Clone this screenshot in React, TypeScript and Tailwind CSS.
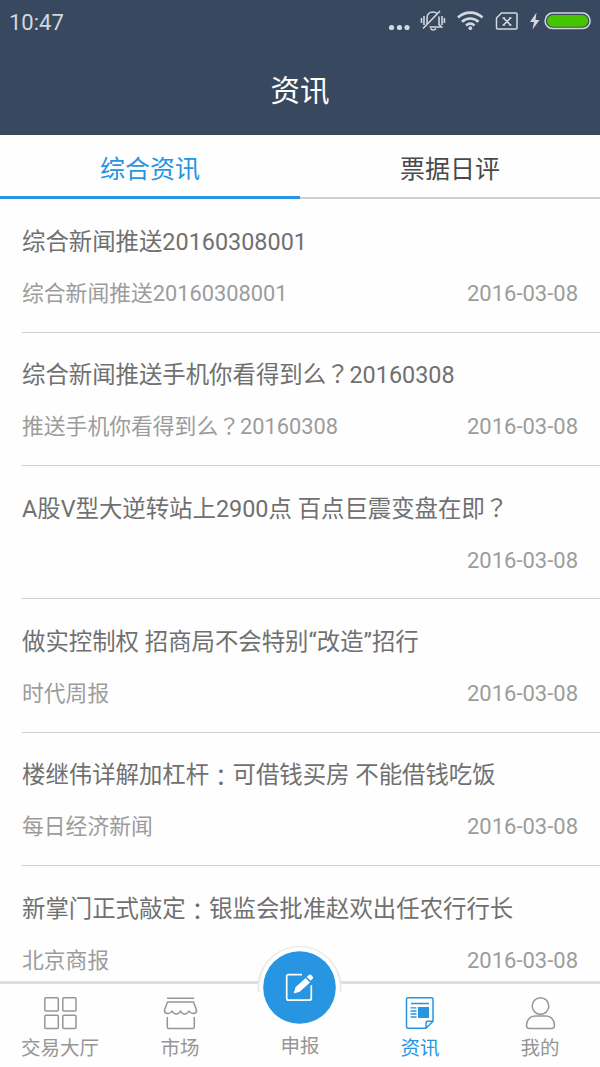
import React from 'react';

interface NewsItem {
  title: string;
  source: string;
  date: string;
}

const news: NewsItem[] = [
  { title: '综合新闻推送20160308001', source: '综合新闻推送20160308001', date: '2016-03-08' },
  { title: '综合新闻推送手机你看得到么？20160308', source: '推送手机你看得到么？20160308', date: '2016-03-08' },
  { title: 'A股V型大逆转站上2900点 百点巨震变盘在即？', source: '', date: '2016-03-08' },
  { title: '做实控制权 招商局不会特别“改造”招行', source: '时代周报', date: '2016-03-08' },
  { title: '楼继伟详解加杠杆：可借钱买房 不能借钱吃饭', source: '每日经济新闻', date: '2016-03-08' },
  { title: '新掌门正式敲定：银监会批准赵欢出任农行行长', source: '北京商报', date: '2016-03-08' },
];

// Full-width punctuation sits in the middle of its box in the TC face
const Mixed: React.FC<{ text: string }> = ({ text }) => (
  <>
    {text.split(/([？：])/).map((part, i) =>
      part === '？' || part === '：' ? (
        <span
          key={i}
          className={`relative leading-none font-['Noto_Sans_CJK_TC',sans-serif] ${part === '：' ? 'top-[3px]' : 'top-0'}`}
        >
          {part}
        </span>
      ) : (
        part
      )
    )}
  </>
);

const StatusBar: React.FC = () => (
  <div className="h-[45px] flex items-center justify-between pl-[9px] pr-[9px] text-[#d3d8de]">
    <span className="text-[22px] leading-none">10:47</span>
    <svg className="w-[204px] h-[45px]" viewBox="387 0 204 45" fill="none" stroke="currentColor">
      <g fill="currentColor" stroke="none">
        <circle cx="391.5" cy="27.5" r="2.6" />
        <circle cx="399.5" cy="27.5" r="2.6" />
        <circle cx="407" cy="27.5" r="2.6" />
      </g>
      {/* muted bell */}
      <g strokeWidth="1.6">
        <path d="M427 24v-6c0-3.500 2.500-6 6-6 1.700 0 3 .6 4 1.500M439 16.500v8l2.500 2.500H429.500M430.500 28.500c1.500 2 4 2 5.500 0" />
        <path d="M440 11L423 28.500" />
        <path d="M424 16v9M421.500 18v5M442 16v9M444.400 18v5" />
      </g>
      {/* wifi */}
      <g strokeWidth="2.6">
        <path d="M458 17.500c7-6.500 17.500-6.500 24.500 0" />
        <path d="M462 21.800c4.800-4.400 11.700-4.400 16.500 0" />
        <path d="M466 25.500c2.600-2.200 5.900-2.200 8.500 0" />
      </g>
      <circle cx="470.300" cy="28.200" r="1.900" fill="currentColor" stroke="none" />
      {/* no sim */}
      <path d="M501.500 13h14.500q1 0 1 1v14q0 1-1 1h-18.500q-1 0-1-1V18z" strokeWidth="1.500" />
      <path d="M503.500 18l7 7M510.500 18l-7 7M502.500 18h2.500M509 18h2.500M502.500 25h2.500M509 25h2.500" strokeWidth="1.600" />
      {/* charging battery */}
      <path d="M536.500 12.500l-6.500 9.500h4l-1.500 7.500 7-9.500h-4z" fill="currentColor" stroke="none" />
      <rect x="545.100" y="13.100" width="45" height="15.500" rx="7.700" strokeWidth="1.500" />
      <rect x="547" y="15" width="41.200" height="11.700" rx="5.800" fill="#47c400" stroke="none" />
    </svg>
  </div>
);

const NewsRow: React.FC<{ item: NewsItem }> = ({ item }) => (
  <li className="h-[133.330px] ml-[22px] pr-[22px] pt-[26.500px] border-b border-[#cfcfcf] whitespace-nowrap">
    <h2 className="h-8 text-[23.400px] leading-8 text-[#707070]">
      <Mixed text={item.title} />
    </h2>
    <div className="mt-5 h-8 flex justify-between text-[21.800px] leading-8 text-[#9c9c9c]">
      <span><Mixed text={item.source} /></span>
      <span className="text-[22px]">{item.date}</span>
    </div>
  </li>
);

const GridIcon = () => (
  <svg className="w-9 h-9" viewBox="42 995 36 36" fill="none" stroke="currentColor" strokeWidth="1.500">
    <rect x="44.800" y="997.800" width="13.500" height="13.200" rx="1" />
    <rect x="62.800" y="997.800" width="13.200" height="13.200" rx="1" />
    <rect x="44.800" y="1015.300" width="13.500" height="13.200" rx="1" />
    <rect x="62.800" y="1015.300" width="13.200" height="13.200" rx="1" />
  </svg>
);

const ShopIcon = () => (
  <svg className="w-9 h-9" viewBox="162 995 36 36" fill="none" stroke="currentColor" strokeWidth="1.500">
    <path d="M167 998.300h27M167.500 1002h26l3 8c.5 4-5.500 5-7.500 1-2 4-6.500 4-8.500 0-2 4-6.500 4-8.500 0-2 4-8 3-7.500-1z" strokeLinejoin="round" />
    <path d="M167.300 1017v10q0 1.500 1.500 1.500h24q1.500 0 1.500-1.500v-10" />
  </svg>
);

const PaperIcon = () => (
  <svg className="w-9 h-9" viewBox="402 995 36 36" fill="none" stroke="currentColor" strokeWidth="1.500">
    <path d="M408 997.800h23.500q1.500 0 1.500 1.500v22l-7 7h-18q-1.500 0-1.500-1.500v-27.500q0-1.500 1.500-1.500z" />
    <path d="M426 1028v-5q0-1.700 1.700-1.700h5.300" />
    <path d="M411 1003.500h18M410.500 1007.800h6M410.500 1011h6M410.500 1014h6M410.500 1017h6" strokeWidth="1.300" />
    <rect x="418" y="1007" width="11" height="11" fill="currentColor" stroke="none" />
  </svg>
);

const UserIcon = () => (
  <svg className="w-9 h-9" viewBox="522 995 36 36" fill="none" stroke="currentColor" strokeWidth="1.500">
    <circle cx="540.500" cy="1006" r="8.300" />
    <path d="M535 1016h11c5 0 8.500 4 8.500 9.500q0 3-3 3h-22q-3 0-3-3c0-5.500 3.500-9.500 8.500-9.500z" />
  </svg>
);

interface NavTabProps {
  label: string;
  active?: boolean;
  children: React.ReactNode;
}

const NavTab: React.FC<NavTabProps> = ({ label, active, children }) => (
  <button className={`flex-1 flex flex-col items-center pt-[11px] ${active ? 'text-[#2795e1]' : 'text-[#969696]'}`}>
    {children}
    <span className="mt-0.5 text-[19.500px] leading-8">{label}</span>
  </button>
);

const App: React.FC = () => {
  return (
    <div className="w-[600px] h-[1067px] flex flex-col overflow-hidden bg-[#fefefe] font-[Roboto,'Noto_Sans_CJK_SC',sans-serif]">
      <header className="h-[135px] shrink-0 bg-[#38495f]">
        <StatusBar />
        <h1 className="h-[90px] text-center text-[29.500px] leading-[92px] text-white">资讯</h1>
      </header>

      <nav className="h-16 shrink-0 flex text-[25px] leading-[70px]">
        <button className="flex-1 h-16 border-b-3 border-[#2795e1] text-[#2795e1]">综合资讯</button>
        <button className="flex-1 h-16 border-b-2 border-[#cfcfcf] text-[#4a4a4a]">票据日评</button>
      </nav>

      <ul className="flex-1 min-h-0 overflow-hidden pt-[0.500px]">
        {news.map((item) => (
          <NewsRow key={item.title} item={item} />
        ))}
      </ul>

      <footer className="relative h-[86px] shrink-0 flex border-t-3 border-[#dcdee1] bg-[#fefefe]">
        <NavTab label="交易大厅"><GridIcon /></NavTab>
        <NavTab label="市场"><ShopIcon /></NavTab>
        <button className="flex-1 flex flex-col items-center pt-[47px] text-[#969696]">
          <span className="text-[19.500px] leading-8">申报</span>
        </button>
        <NavTab label="资讯" active><PaperIcon /></NavTab>
        <NavTab label="我的"><UserIcon /></NavTab>

        {/* raised compose button */}
        <svg className="absolute left-[255px] -top-[43px] w-[90px] h-[90px]" viewBox="255 941 90 90">
          <path d="M258.700 992a41 41 0 1 1 81.600 0" fill="#fefefe" stroke="#e9e9e9" strokeWidth="2" />
          <circle cx="299.500" cy="987" r="40" fill="#fefefe" />
          <circle cx="299.500" cy="987.500" r="36.300" fill="#2795e1" />
          <path d="M302 974.700h-13.300q-2 0-2 2v21.500q0 2 2 2h20.600q2 0 2-2v-13" fill="none" stroke="#fff" strokeWidth="1.700" />
          <path d="M293.700 993.500l1.800-6.300 10.200-9.200 4.300 4.600-10.300 9.200zM306.700 977l2.200-2q1.500-1 2.800.5l1 1.200q1 1.200-.3 2.300l-1.700 1.700z" fill="#fff" />
        </svg>
      </footer>
    </div>
  );
};

export default App;
